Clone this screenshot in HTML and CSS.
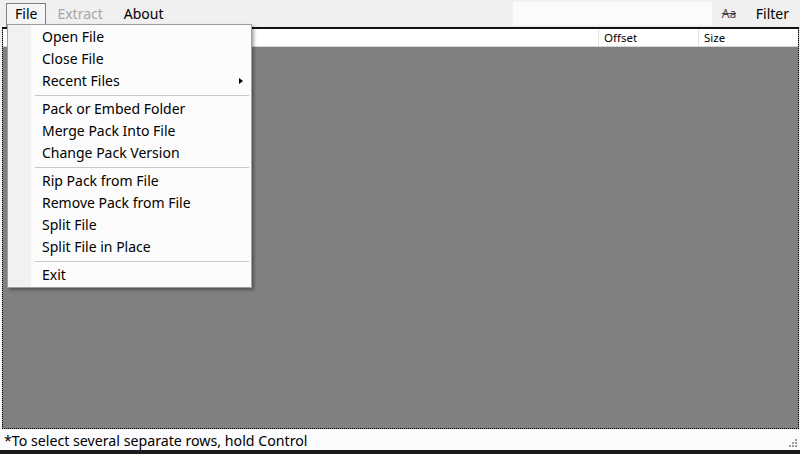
FILE: index.html
```html
<!DOCTYPE html>
<html>
<head>
<meta charset="utf-8">
<link rel="stylesheet" href="styles.css">
</head>
<body>
<div class="app">
  <div class="menubar">
    <div class="mitem open">File</div>
    <div class="mitem disabled">Extract</div>
    <div class="mitem about">About</div>
    <div class="search"></div>
    <div class="case">Aa</div>
    <div class="filter">Filter</div>
  </div>
  <div class="table">
    <div class="thead">
      <div class="th name"></div>
      <div class="th offset">Offset</div>
      <div class="th size">Size</div>
    </div>
    <div class="tbody"></div>
  </div>
  <div class="status">
    <span>*To select several separate rows, hold Control</span>
    <svg class="grip" width="12" height="12" viewBox="0 0 12 12">
      <rect x="9" y="1" width="2" height="2" fill="#9a9a9a"/>
      <rect x="6" y="4" width="2" height="2" fill="#9a9a9a"/>
      <rect x="9" y="4" width="2" height="2" fill="#9a9a9a"/>
      <rect x="3" y="7" width="2" height="2" fill="#9a9a9a"/>
      <rect x="6" y="7" width="2" height="2" fill="#9a9a9a"/>
      <rect x="9" y="7" width="2" height="2" fill="#9a9a9a"/>
    </svg>
  </div>
  <div class="taskbar"></div>

  <div class="dropdown">
    <div class="ditem">Open File</div>
    <div class="ditem">Close File</div>
    <div class="ditem sub">Recent Files<span class="arrow"></span></div>
    <div class="sep"></div>
    <div class="ditem">Pack or Embed Folder</div>
    <div class="ditem">Merge Pack Into File</div>
    <div class="ditem">Change Pack Version</div>
    <div class="sep"></div>
    <div class="ditem">Rip Pack from File</div>
    <div class="ditem">Remove Pack from File</div>
    <div class="ditem">Split File</div>
    <div class="ditem">Split File in Place</div>
    <div class="sep"></div>
    <div class="ditem">Exit</div>
  </div>
</div>
</body>
</html>
```
FILE: styles.css
```css
html, body {
  margin: 0;
  padding: 0;
}
body {
  font-family: "Noto Sans", "DejaVu Sans", sans-serif;
  font-size: 14px;
  color: #000;
  background: #f0f0f0;
}
.app {
  position: relative;
  width: 800px;
  height: 454px;
  display: flex;
  flex-direction: column;
  overflow: hidden;
}
.menubar {
  height: 27px;
  display: flex;
  align-items: center;
  background: #f0f0f0;
  flex: none;
}
.mitem {
  height: 22px;
  line-height: 20px;
  padding: 0 9px;
  margin-top: 1px;
  box-sizing: border-box;
  border: 1px solid transparent;
}
.mitem:first-child {
  margin-left: 6px;
  padding: 0 8px;
}
.mitem.open {
  border-color: #808080;
  border-bottom-color: transparent;
  background: #f5f5f5;
  height: 24px;
  margin-top: 3px;
}
.mitem.disabled {
  color: #a6a6a6;
  margin-left: 1px;
}
.mitem.about {
  margin-left: 1px;
}
.search {
  margin-left: auto;
  width: 199px;
  height: 23px;
  background: #fbfbfb;
}
.case {
  margin-left: 10px;
  font-size: 12px;
  color: #444;
  text-decoration: line-through;
  width: 24px;
}
.filter {
  margin-left: 10px;
  margin-right: 11px;
}
.table {
  flex: 1;
  margin: 0 1px 0 2px;
  border-top: 2px solid #1a1a1a;
  display: flex;
  flex-direction: column;
  outline: 1px dotted #000;
  outline-offset: -1px;
  border-left: 1px dotted #000;
  border-right: 1px dotted #000;
  border-bottom: 1px dotted #000;
  background: #808080;
}
.thead {
  display: flex;
  height: 17px;
  background: #fff;
  border-bottom: 1px solid #d5d5d5;
  flex: none;
  font-size: 11.5px;
}
.th {
  box-sizing: border-box;
  padding-left: 5px;
  line-height: 17px;
  border-right: 1px solid #e3e3e3;
}
.th.name { flex: 1; }
.th.offset { width: 100px; }
.th.size { width: 99px; border-right: none; }
.tbody {
  flex: 1;
  background: #808080;
}
.status {
  height: 20px;
  flex: none;
  background: #fcfbfd;
  display: flex;
  align-items: center;
  padding-left: 4px;
  margin-top: 1px;
  position: relative;
  font-size: 14.2px;
}
.status span {
  margin-top: 1px;
}
.grip {
  position: absolute;
  right: 2px;
  bottom: 0;
}
.taskbar {
  height: 4px;
  background: #1c1c1c;
  flex: none;
}
.dropdown {
  position: absolute;
  left: 7px;
  top: 24px;
  width: 245px;
  box-sizing: border-box;
  border: 1px solid #a0a0a0;
  background: linear-gradient(to right, #f1f1f1 0, #f1f1f1 23px, #fcfcfc 23px);
  box-shadow: 2px 2px 3px rgba(0,0,0,0.35);
  padding: 1px 0 1px;
}
.ditem {
  height: 22px;
  line-height: 22px;
  padding-left: 34px;
  position: relative;
}
.arrow {
  position: absolute;
  right: 8px;
  top: 8px;
  width: 0;
  height: 0;
  border-top: 3px solid transparent;
  border-bottom: 3px solid transparent;
  border-left: 4px solid #000;
}
.sep {
  height: 1px;
  background: #c8c8c8;
  margin: 3px 2px 2px 27px;
}
```
